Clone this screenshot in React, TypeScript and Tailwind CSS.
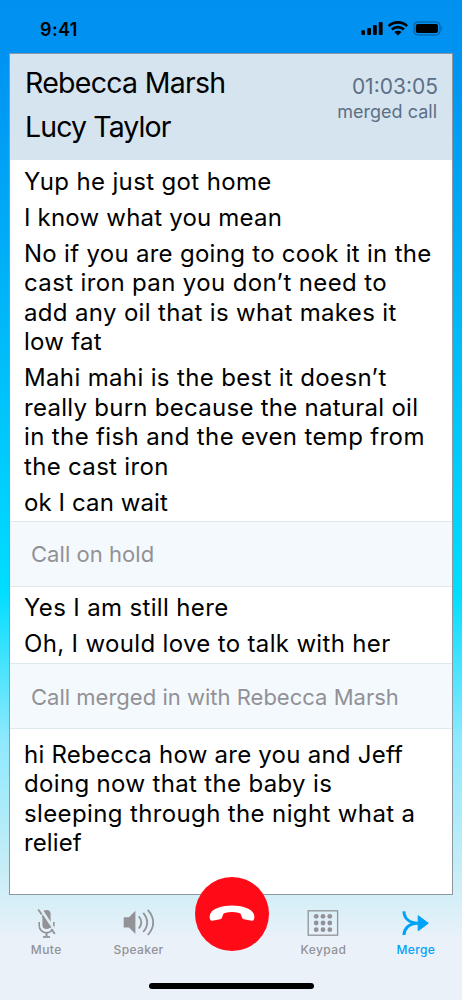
import type { ReactNode } from "react";

type Line = { text: string; tracking: string };
type Message = Line[];

const beforeHold: Message[] = [
  [{ text: "Yup he just got home", tracking: "tracking-[0.36px]" }],
  [{ text: "I know what you mean", tracking: "tracking-[0.2px]" }],
  [
    { text: "No if you are going to cook it in the", tracking: "tracking-[0.29px]" },
    { text: "cast iron pan you don’t need to", tracking: "tracking-[0.36px]" },
    { text: "add any oil that is what makes it", tracking: "tracking-[0.34px]" },
    { text: "low fat", tracking: "tracking-[0.25px]" },
  ],
  [
    { text: "Mahi mahi is the best it doesn’t", tracking: "tracking-[0.35px]" },
    { text: "really burn because the natural oil", tracking: "tracking-[0.27px]" },
    { text: "in the fish and the even temp from", tracking: "tracking-[0.37px]" },
    { text: "the cast iron", tracking: "tracking-[0.32px]" },
  ],
  [{ text: "ok I can wait", tracking: "tracking-[0.1px]" }],
];

const afterHold: Message[] = [
  [{ text: "Yes I am still here", tracking: "tracking-[0.35px]" }],
  [{ text: "Oh, I would love to talk with her", tracking: "tracking-[0.34px]" }],
];

const afterMerge: Message[] = [
  [
    { text: "hi Rebecca how are you and Jeff", tracking: "tracking-[0.24px]" },
    { text: "doing now that the baby is", tracking: "tracking-[0.34px]" },
    { text: "sleeping through the night what a", tracking: "tracking-[0.37px]" },
    { text: "relief", tracking: "tracking-[0.1px]" },
  ],
];

function Messages({ items, className }: { items: Message[]; className: string }) {
  return (
    <div className={`flex flex-col gap-[6.4px] pl-[14px] text-[24px] leading-[29.5px] text-black ${className}`}>
      {items.map((message) => (
        <p key={message[0].text}>
          {message.map((line) => (
            <span key={line.text} className={`block whitespace-nowrap ${line.tracking}`}>
              {line.text}
            </span>
          ))}
        </p>
      ))}
    </div>
  );
}

function Notice({ className, children }: { className: string; children: ReactNode }) {
  return (
    <div
      className={`flex h-[66px] shrink-0 items-center border-y border-[#dde9ed] bg-[#f4f9fd] pl-[21px] text-[22px] whitespace-nowrap text-[#919196] ${className}`}
    >
      {children}
    </div>
  );
}

function Tab({ label, active, children }: { label: string; active?: boolean; children: ReactNode }) {
  return (
    <button
      className={`flex flex-1 flex-col items-center ${active ? "text-[#00a2f7]" : "text-[#929297]"}`}
    >
      <span className="flex h-[34px] items-center">{children}</span>
      <span className="mt-[3px] text-[12px] leading-[16px] font-medium tracking-[0.4px]">{label}</span>
    </button>
  );
}

function StatusBar() {
  return (
    <div className="flex h-[53px] shrink-0 justify-between pt-[18px] pr-[20px] pl-[40px]">
      <span className="pt-px text-[18px] leading-[22px] font-semibold tracking-[0.4px]">9:41</span>
      <svg width="82" height="20" viewBox="0 0 82 20" className="mt-px">
        <rect x="1.4" y="11.2" width="3.6" height="4.8" rx="1" />
        <rect x="7.2" y="9" width="3.8" height="7" rx="1" />
        <rect x="13" y="6" width="3.8" height="10" rx="1" />
        <rect x="18.8" y="3" width="3.8" height="13" rx="1" />
        <path d="M28.7 7.1a13.3 13.3 0 0 1 18.4 0M31.9 10.5a8.6 8.6 0 0 1 12 0" fill="none" stroke="#000" strokeWidth="2.7" />
        <path d="M34.3 13.1a5.2 5.2 0 0 1 7.2 0L37.9 16.4Z" />
        <rect x="54" y="3" width="26" height="13" rx="3.8" fill="none" stroke="#000" strokeOpacity=".4" />
        <rect x="55.8" y="5" width="22.2" height="9" rx="2" />
        <path d="M81 7.6q1.4 1.9 0 4Z" fillOpacity=".45" />
      </svg>
    </div>
  );
}

export default function App() {
  return (
    <div className="flex h-[1000px] w-[462px] flex-col overflow-hidden bg-[linear-gradient(180deg,#0090f0_0px,#0092f2_50px,#00deff_592px,#8ee9ff_740px,#c6edf6_870px,#eaf1f9_940px)] font-['Inter',sans-serif] text-black">
      <StatusBar />
      <main className="mx-[9px] flex h-[842px] w-[444px] shrink-0 flex-col border border-[#8d979f] bg-white">
        <header className="flex h-[106px] shrink-0 justify-between bg-[#d6e4ef] pr-[14px] pl-[15px]">
          <h1 className="pt-[7px] text-[28.5px] leading-[44px] font-normal whitespace-nowrap">
            <span className="block tracking-[-0.73px]">Rebecca Marsh</span>
            <span className="block tracking-[-0.9px]">Lucy Taylor</span>
          </h1>
          <div className="flex flex-col items-end pt-[19px] text-[#5c7085]">
            <span className="text-[21px] leading-[27px]">01:03:05</span>
            <span className="pr-[1px] text-[18px] leading-[24px]">merged call</span>
          </div>
        </header>
        <Messages items={beforeHold} className="h-[361px] pt-[7px]" />
        <Notice className="tracking-[0.05px]">Call on hold</Notice>
        <Messages items={afterHold} className="h-[76px] pt-[6px]" />
        <Notice className="pt-[2px] tracking-[0.01px]">Call merged in with Rebecca Marsh</Notice>
        <Messages items={afterMerge} className="pt-[10.6px]" />
      </main>
      <nav className="flex h-[85px] shrink-0 pt-[10px]">
        <Tab label="Mute">
          <svg width="24" height="34" viewBox="0 0 24 34" fill="none" stroke="currentColor">
            <path d="M8.4 9a4 4 0 0 1 4-4h.2a4 4 0 0 1 4 4v11a4 4 0 0 1-4 4h-.2a4 4 0 0 1-4-4Z" fill="currentColor" stroke="none" />
            <path d="M5.2 17v3.5a7.3 7.3 0 0 0 14.6 0V17" strokeWidth="1.6" />
            <path d="M12.5 27.5v4" strokeWidth="2" />
            <path d="M9 32h7" strokeWidth="1.7" />
            <path d="m7.3 5.5 12.5 19" stroke="#e0eff7" strokeWidth="3.2" />
            <path d="m4.2 4.5 3.6 5M8.4 10.6l8.2 12.2M17.4 24l3.4 5" strokeWidth="1.8" />
          </svg>
        </Tab>
        <Tab label="Speaker">
          <svg width="34" height="34" viewBox="0 0 34 34">
            <path d="M1.7 12.2h5.3l6.4-6.4v23.2l-6.4-6.4H1.7Z" fill="currentColor" />
            <path d="M16.8 11.3q5 6.1 0 12.2M21.2 7.8q8 9.6 0 19.2M25.8 4.8q10.8 12.6 0 25.2" fill="none" stroke="currentColor" strokeWidth="1.8" />
          </svg>
        </Tab>
        <div className="relative flex-1">
          <button
            aria-label="End call"
            className="absolute -top-[28px] left-[10px] flex size-[74px] items-center justify-center rounded-full bg-[#ff0a17]"
          >
            <svg width="46" height="20" viewBox="0 0 46 20" fill="#fff">
              <path d="M23 1.6C14 1.6 4.5 4.3 1.6 9.2C.5 11 .4 13.5 1.1 15.4Q1.7 17 3.3 16.8L11 15.3Q12.5 15 13 13.5L14.3 9.9Q15 8.4 23 7.9Q31 8.4 31.7 9.9L33 13.5Q33.5 15 35 15.3L42.7 16.8Q44.3 17 44.9 15.4C45.6 13.5 45.5 11 44.4 9.2C41.5 4.3 32 1.6 23 1.6Z" />
            </svg>
          </button>
        </div>
        <Tab label="Keypad">
          <svg width="32" height="34" viewBox="0 0 32 34">
            <rect x="1.2" y="5.8" width="29.4" height="24.4" fill="none" stroke="currentColor" strokeWidth="1.3" />
            <g fill="currentColor">
              <circle cx="9.2" cy="11.3" r="2.4" /><circle cx="16" cy="11.3" r="2.4" /><circle cx="22.8" cy="11.3" r="2.4" />
              <circle cx="9.2" cy="18" r="2.4" /><circle cx="16" cy="18" r="2.4" /><circle cx="22.8" cy="18" r="2.4" />
              <circle cx="9.2" cy="24.7" r="2.4" /><circle cx="16" cy="24.7" r="2.4" /><circle cx="22.8" cy="24.7" r="2.4" />
            </g>
          </svg>
        </Tab>
        <Tab label="Merge" active>
          <svg width="30" height="34" viewBox="-1 0 30 34">
            <path d="M1.9 6.3C2.3 13 7 18.2 16 18.2M1.9 30C2.3 23.4 7 18.2 16 18.2" fill="none" stroke="currentColor" strokeWidth="3" />
            <path d="M16.2 10.7 26.3 18.2 16.2 25.8Z" fill="currentColor" stroke="currentColor" strokeWidth="1" strokeLinejoin="round" />
          </svg>
        </Tab>
      </nav>
      <div className="mt-[3px] ml-[149px] h-[6px] w-[165px] shrink-0 rounded-full bg-black" />
    </div>
  );
}
